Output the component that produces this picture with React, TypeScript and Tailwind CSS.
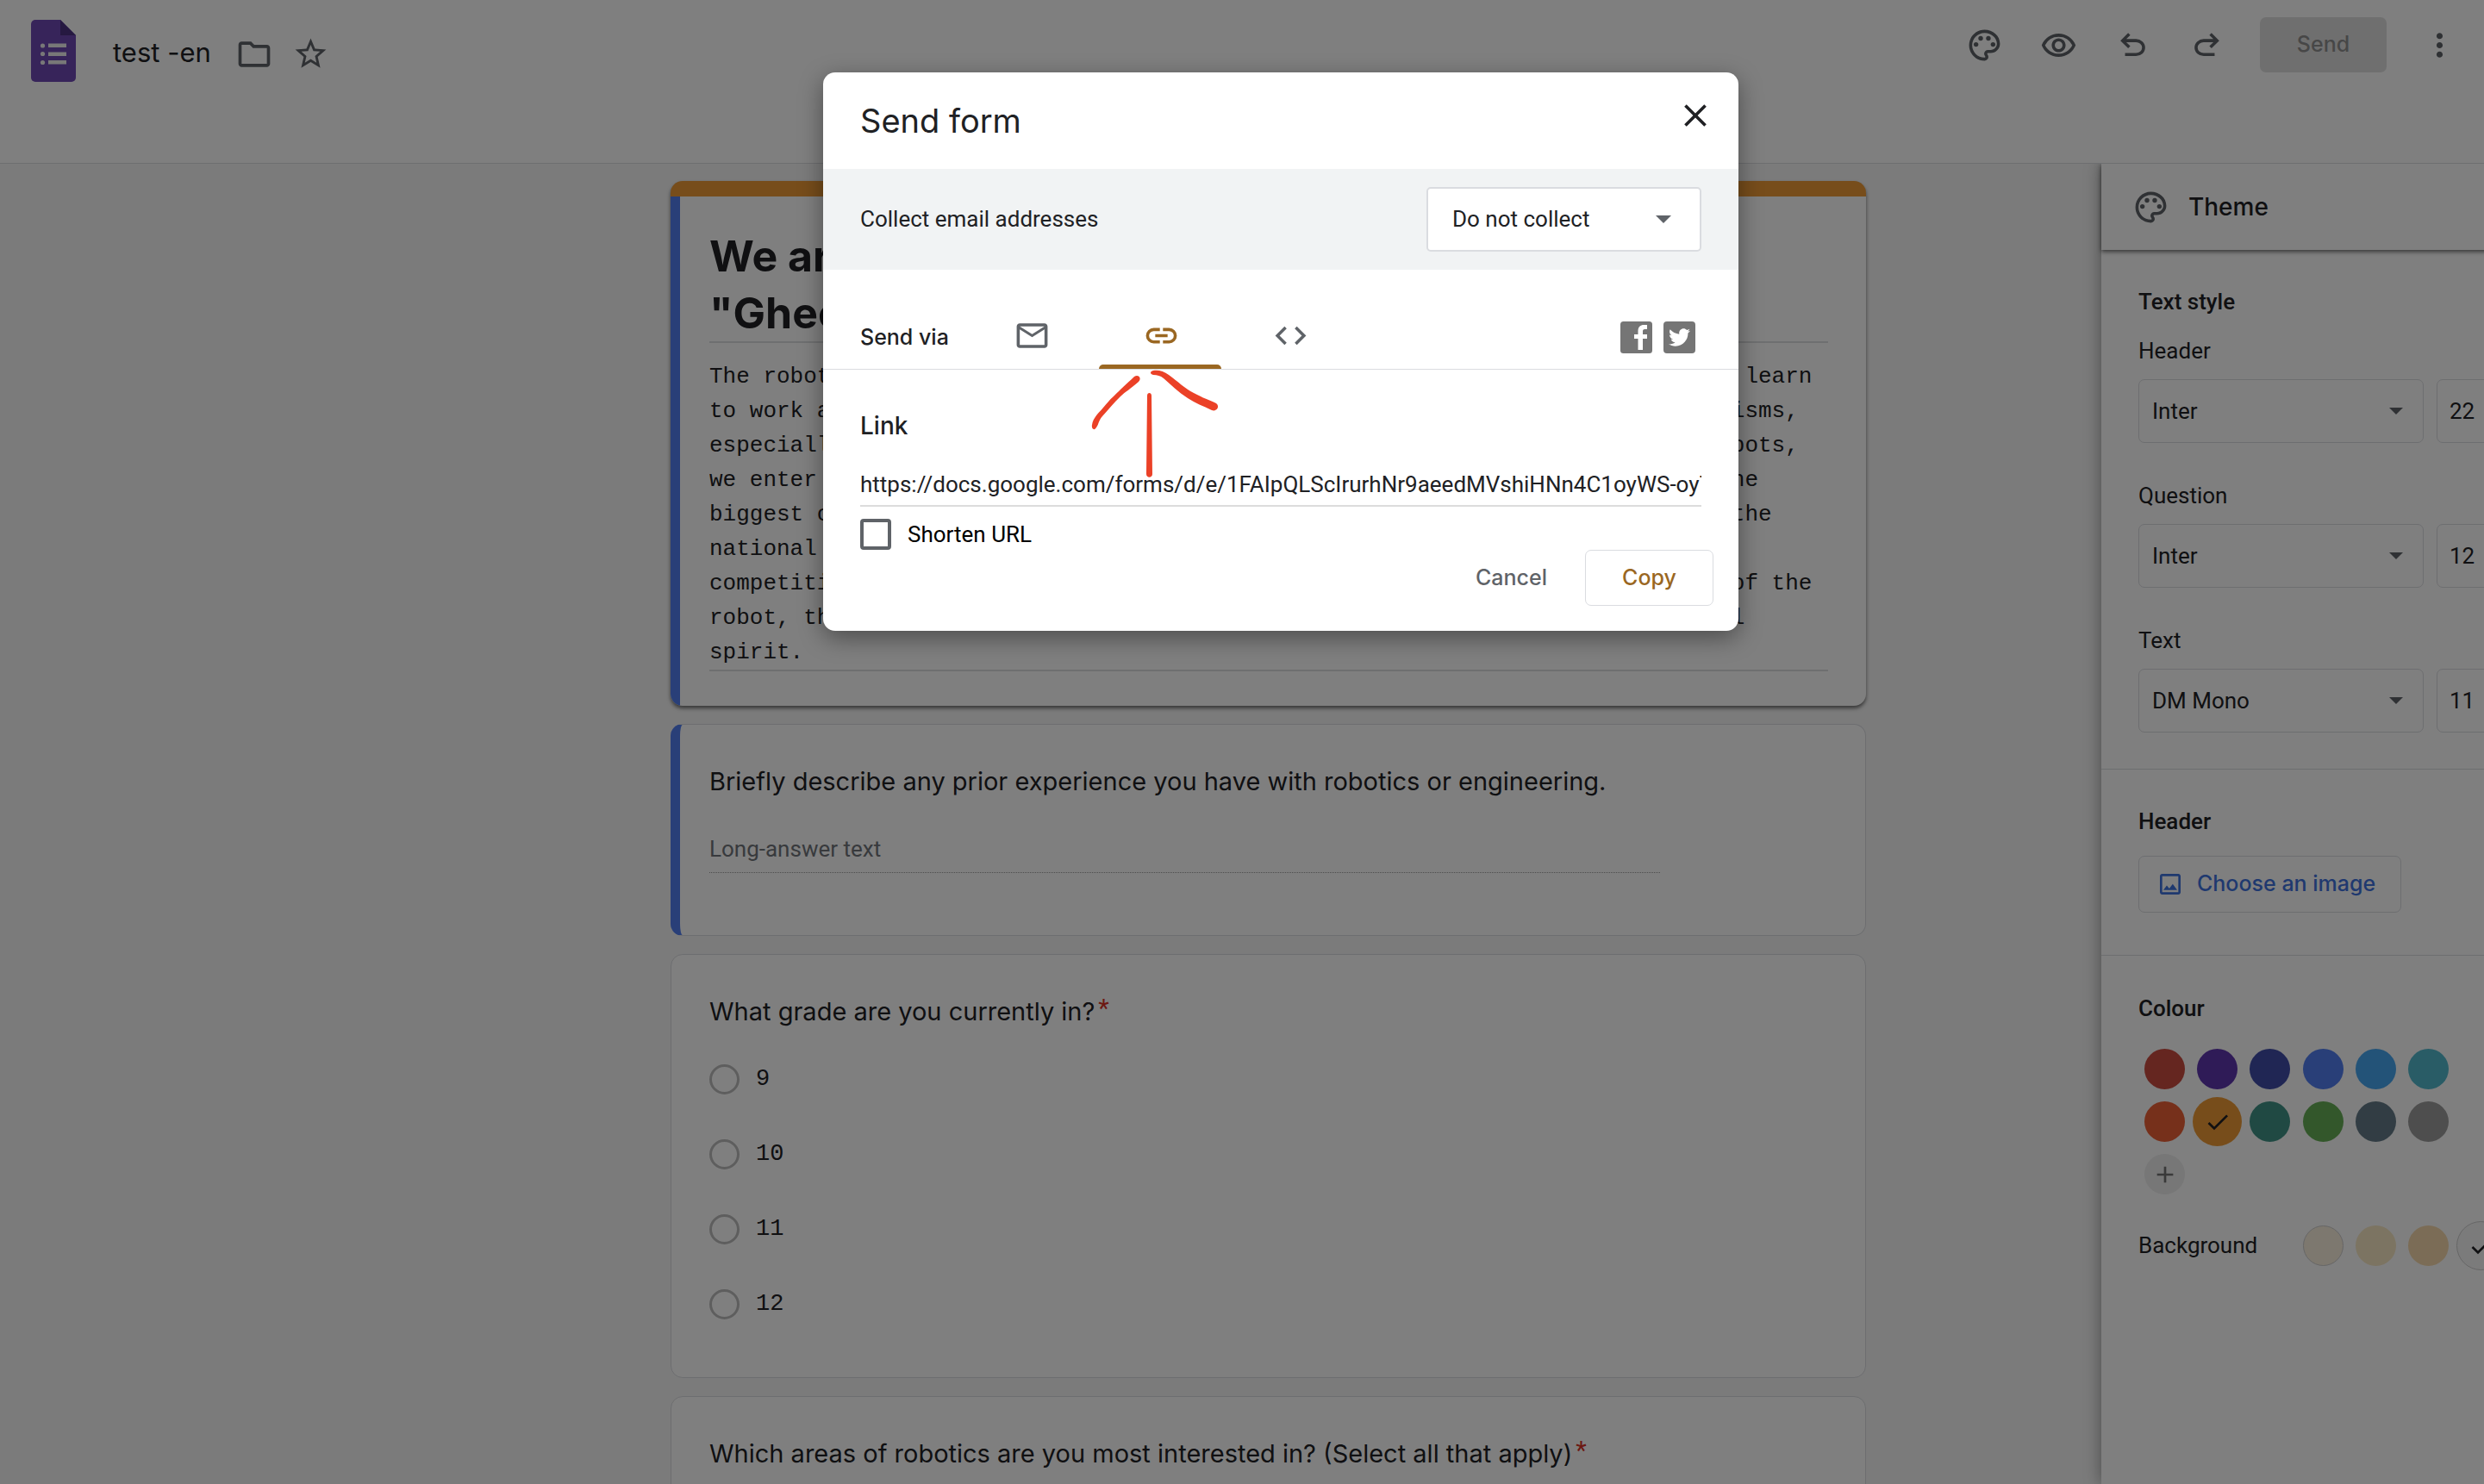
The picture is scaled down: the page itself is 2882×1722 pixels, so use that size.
import type { ReactNode } from "react";
import {
  MdAdd,
  MdCheck,
  MdClose,
  MdMoreVert,
  MdOutlineColorLens,
  MdOutlineFolder,
  MdOutlineImage,
  MdOutlineMailOutline,
  MdOutlineRemoveRedEye,
  MdOutlineStarBorder,
} from "react-icons/md";
import { FaTwitter } from "react-icons/fa";

const description = [
  "The robotics club at our school is a place where all the bright students can learn",
  "to work as a team, build robots, program them and design some complex mechanisms,",
  "especially drive trains and manipulators. With the help of our own finest robots,",
  "we enter competitions all over the country, and one of those, no doubt, is the",
  "biggest competitions of this year. We are looking for new people to join in the",
  "national championship with us. The",
  "competitions are about much more than just the careful mechanical strengths of the",
  "robot, they are also about friendship, mutual support, and the strong overall",
  "spirit.",
];

const colours = [
  { name: "Red", className: "size-[47px] bg-[#ca4c41]" },
  { name: "Purple", className: "size-[47px] bg-[#5f36ae]" },
  { name: "Indigo", className: "size-[47px] bg-[#404ca8]" },
  { name: "Blue", className: "size-[47px] bg-[#527ff0]" },
  { name: "Light blue", className: "size-[47px] bg-[#46a6f0]" },
  { name: "Cyan", className: "size-[47px] bg-[#52b9cd]" },
  { name: "Deep orange", className: "size-[47px] bg-[#ec6137]" },
  { name: "Orange", className: "size-[57px] bg-[#ee9b37]", selected: true },
  { name: "Teal", className: "size-[47px] bg-[#409386]" },
  { name: "Green", className: "size-[47px] bg-[#66af56]" },
  { name: "Blue grey", className: "size-[47px] bg-[#657b88]" },
  { name: "Grey", className: "size-[47px] bg-[#9c9c9c]" },
];

const backgrounds = [
  { name: "Light", className: "size-[47px] border border-[#cccccc] bg-[#fbf0de]" },
  { name: "Medium", className: "size-[47px] bg-[#f8e8c4]" },
  { name: "Dark", className: "size-[47px] bg-[#f6d9ac]" },
  { name: "Neutral", className: "size-[57px] border border-[#cccccc] bg-[#f6f6f6]", selected: true },
];

function UndoIcon({ flipped = false }: { flipped?: boolean }) {
  return (
    <svg viewBox="0 0 24 24" fill="currentColor" className={flipped ? "size-[43px] -scale-x-100" : "size-[43px]"}>
      <path d="M7 19v-2h7.1q1.575 0 2.737-1T18 13.5 16.838 11 14.1 10H7.8l2.6 2.6L9 14 4 9l5-5 1.4 1.4L7.8 8h6.3q2.425 0 4.163 1.575T20 13.5t-1.737 3.925T14.1 19z" />
    </svg>
  );
}

function Caret({ className }: { className: string }) {
  return (
    <svg viewBox="0 0 16 8" fill="#5f6368" className={className}>
      <path d="M0 0h16l-8 8z" />
    </svg>
  );
}

function FormsLogo() {
  return (
    <svg viewBox="0 0 52 72" className="h-[72px] w-[52px]">
      <path d="M5 0h29l18 18v49a5 5 0 0 1-5 5H5a5 5 0 0 1-5-5V5a5 5 0 0 1 5-5z" fill="#6f48b5" />
      <path d="M34 0l18 18H34z" fill="#4c3382" />
      <g fill="#f1f1f1">
        <circle cx="13.500" cy="30" r="2.600" />
        <circle cx="13.500" cy="39.500" r="2.600" />
        <circle cx="13.500" cy="49.500" r="2.600" />
        <path d="M20 27.500h21v4.500H20zM20 37.500h21V42H20zM20 47h21v4.500H20z" />
      </g>
    </svg>
  );
}

function Header() {
  return (
    <header className="flex h-[190px] shrink-0 items-start border-b border-[#dadce0] bg-white pr-[120px] pl-9 text-[#5f6368]">
      <a href="#forms" aria-label="Forms home" className="mt-[23px]">
        <FormsLogo />
      </a>
      <h1 className="mt-[38px] ml-[43px] font-['Inter',sans-serif] text-[31px] leading-[46px] text-[#202124]">test -en</h1>
      <button aria-label="Move to folder" className="mt-[41px] ml-7">
        <MdOutlineFolder className="size-[44px]" />
      </button>
      <button aria-label="Star" className="mt-[41px] ml-[22px]">
        <MdOutlineStarBorder className="size-[43px]" />
      </button>
      <div className="mt-5 ml-auto flex h-16 items-center">
        <button aria-label="Customise theme">
          <MdOutlineColorLens className="size-[43px]" />
        </button>
        <button aria-label="Preview" className="ml-[43px]">
          <MdOutlineRemoveRedEye className="size-[43px]" />
        </button>
        <button aria-label="Undo" className="ml-[43px]">
          <UndoIcon />
        </button>
        <button aria-label="Redo" className="ml-[43px]">
          <UndoIcon flipped />
        </button>
        <button className="ml-10 h-16 w-[147px] rounded-[7px] bg-[#dfdfdf] font-['Inter',sans-serif] text-[25px] font-medium text-[#8f8f8f]">
          Send
        </button>
        <button aria-label="More" className="ml-10">
          <MdMoreVert className="size-[43px]" />
        </button>
      </div>
    </header>
  );
}

function Question({ children, required = false }: { children: ReactNode; required?: boolean }) {
  return (
    <h3 className="flex font-['Inter',sans-serif] text-[29px] leading-9 text-[#202124]">
      {children}
      {required && <span className="ml-1 -mt-1 font-['Roboto',sans-serif] text-[#d93025]">*</span>}
    </h3>
  );
}

function FormCards() {
  return (
    <main className="flex min-w-0 flex-1 justify-center bg-[#f6f6f6] pt-5 pl-[505px]">
      <div className="flex w-full max-w-[1387px] flex-col gap-[21px]">
        <section className="shrink-0 overflow-hidden rounded-[14px] border-t-[18px] border-[#ee9b37] bg-white shadow-[0_3px_4px_#0008]">
          <div className="border-l-[11px] border-[#527ff0] pt-9 pr-11 pb-10 pl-[34px]">
            <h2 className="overflow-hidden border-b-2 border-[#dcdee1] font-['Inter',sans-serif] text-[50px] leading-[66px] font-bold whitespace-nowrap text-[#202124]">
              We are the robotics team
              <br />
              "Gheorghe Asachi" High School
            </h2>
            <p className="overflow-hidden border-b-2 border-[#dcdee1] pt-[19px] font-['Liberation_Mono',monospace] text-[26px] leading-[40px] whitespace-nowrap text-[#202124]">
              {description.map((line) => (
                <span key={line} className="block">
                  {line}
                </span>
              ))}
            </p>
          </div>
        </section>

        <section className="flex h-[246px] shrink-0 flex-col rounded-[14px] border-y border-r border-l-[11px] border-y-[#dadce0] border-r-[#dadce0] border-l-[#527ff0] bg-white pt-12 pr-[43px] pl-[34px]">
          <Question>Briefly describe any prior experience you have with robotics or engineering.</Question>
          <p className="mt-[42px] w-[85%] border-b border-dotted border-[#9a9a9a] pb-[9px] font-['Roboto',sans-serif] text-[26px] leading-9 text-[#70757a]">
            Long-answer text
          </p>
        </section>

        <section className="shrink-0 rounded-[14px] border border-[#dadce0] bg-white px-11 pt-12 pb-[67px]">
          <Question required>What grade are you currently in?</Question>
          <fieldset className="mt-[42px] flex flex-col gap-[51px]">
            {["9", "10", "11", "12"].map((grade) => (
              <label
                key={grade}
                className="flex h-9 items-center gap-[19px] font-['Liberation_Mono',monospace] text-[27px] text-[#202124]"
              >
                <input
                  type="radio"
                  name="grade"
                  className="size-[35px] appearance-none rounded-full border-3 border-[#bdbdbd]"
                />
                {grade}
              </label>
            ))}
          </fieldset>
        </section>

        <section className="h-[300px] shrink-0 rounded-[14px] border border-[#dadce0] bg-white px-11 pt-12">
          <Question required>Which areas of robotics are you most interested in? (Select all that apply)</Question>
        </section>
      </div>
    </main>
  );
}

function FontRow({ label, font, size }: { label: string; font: string; size: string }) {
  const id = label.toLowerCase();
  return (
    <div className="flex flex-col gap-[17px]">
      <label htmlFor={id} className="leading-8">
        {label}
      </label>
      <div className="flex gap-[15px]">
        <div className="relative">
          <select
            id={id}
            className="h-[74px] w-[331px] appearance-none rounded-[7px] border border-[#dadce0] px-[15px]"
            defaultValue={font}
          >
            <option>{font}</option>
          </select>
          <Caret className="pointer-events-none absolute top-[33px] right-6 h-2 w-4" />
        </div>
        <select
          aria-label={label + " size"}
          className="h-[74px] w-[102px] appearance-none rounded-[7px] border border-[#dadce0] px-3.5"
          defaultValue={size}
        >
          <option>{size}</option>
        </select>
      </div>
    </div>
  );
}

function Check() {
  return <MdCheck className="size-8 text-[#202124]" />;
}

function ThemePanel() {
  return (
    <aside className="z-10 w-[534px] shrink-0 bg-white font-['Roboto',sans-serif] text-[26px] text-[#202124] shadow-[0_0_18px_#0006]">
      <div className="flex h-[100px] items-center gap-[22px] pl-9 shadow-[0_2px_5px_#0009]">
        <MdOutlineColorLens className="size-[43px] text-[#5f6368]" />
        <h2 className="font-['Inter',sans-serif] text-[28px] font-medium">Theme</h2>
      </div>

      <section className="border-b border-[#dadce0] pt-11 pb-[42px] pl-[43px]">
        <h3 className="mb-[25px] leading-8 font-medium">Text style</h3>
        <div className="flex flex-col gap-[45px]">
          <FontRow label="Header" font="Inter" size="22" />
          <FontRow label="Question" font="Inter" size="12" />
          <FontRow label="Text" font="DM Mono" size="11" />
        </div>
      </section>

      <section className="border-b border-[#dadce0] pt-11 pb-[49px] pl-[43px]">
        <h3 className="mb-6 leading-8 font-medium">Header</h3>
        <button className="flex h-[66px] w-[305px] items-center gap-[15px] rounded-[7px] border border-[#dadce0] pl-5 font-['Inter',sans-serif] text-[25px] font-medium whitespace-nowrap text-[#3e72de]">
          <MdOutlineImage className="size-8 shrink-0" />
          Choose an image
        </button>
      </section>

      <section className="pt-[45px] pl-[43px]">
        <h3 className="mb-6 leading-8 font-medium">Colour</h3>
        <div className="grid w-[367px] grid-cols-6">
          {colours.map((colour) => (
            <div key={colour.name} className="flex h-[61px] items-center justify-center">
              <button aria-label={colour.name} className={"flex shrink-0 items-center justify-center rounded-full " + colour.className}>
                {colour.selected && <Check />}
              </button>
            </div>
          ))}
          <div className="flex h-[61px] items-center justify-center">
            <button aria-label="Add custom colour" className="flex size-[47px] items-center justify-center rounded-full bg-[#eeeeee]">
              <MdAdd className="size-8 text-[#757575]" />
            </button>
          </div>
        </div>
        <div className="mt-[22px] flex h-[61px] items-center">
          <h3 className="w-[184px]">Background</h3>
          {backgrounds.map((background) => (
            <div key={background.name} className="flex w-[61px] justify-center">
              <button
                aria-label={background.name}
                className={"flex shrink-0 items-center justify-center rounded-full " + background.className}
              >
                {background.selected && <Check />}
              </button>
            </div>
          ))}
        </div>
      </section>
    </aside>
  );
}

function RedArrow() {
  return (
    <svg
      viewBox="0 0 160 140"
      fill="#eb4127"
      className="pointer-events-none absolute top-[345px] left-[305px] h-[140px] w-[160px]"
    >
      <path d="M56 8C61 5 65 10 61 14C52 22 45 26 40 31C32 39 26 46 19 54C14 60 15 63 12 67C10 71 6 69 7 64C8 56 14 51 20 44C29 33 34 29 40 23C46 17 52 12 56 8z" />
      <path d="M71 30C71 26 76 26 76 30L77 121C77 126 70 126 70 121z" />
      <path d="M78 1C83 0 90 1 96 6C107 14 115 22 125 27C136 33 143 35 151 39C156 43 151 49 146 47C136 42 127 39 118 33C107 26 98 17 90 10C86 7 83 6 78 6C74 5 74 2 78 1z" />
    </svg>
  );
}

function SendDialog() {
  return (
    <div
      role="dialog"
      aria-labelledby="dialog-title"
      className="relative w-full max-w-[1062px] self-start rounded-[14px] bg-white font-['Roboto',sans-serif] text-[26px] text-[#202124] shadow-[0_8px_28px_#0006]"
    >
      <div className="flex items-start justify-between py-[26px] pr-[26px] pl-[43px]">
        <h2 id="dialog-title" className="font-['Inter',sans-serif] text-[38px] leading-[60px]">
          Send form
        </h2>
        <button aria-label="Close" className="flex size-12 items-center justify-center">
          <MdClose className="size-[44px]" />
        </button>
      </div>

      <div className="flex h-[117px] items-center justify-between bg-[#f1f3f4] px-[43px]">
        <label htmlFor="collect">Collect email addresses</label>
        <div className="relative">
          <select
            id="collect"
            defaultValue="Do not collect"
            className="h-[75px] w-[319px] appearance-none rounded-[5px] border-2 border-[#dadce0] bg-white px-7"
          >
            <option>Do not collect</option>
          </select>
          <Caret className="pointer-events-none absolute top-[33px] right-[35px] h-[9px] w-[18px]" />
        </div>
      </div>

      <div className="flex border-b border-[#dadce0] pt-[38px] pr-[50px] pl-[43px] text-[#5f6368]">
        <h3 className="h-[77px] w-[124px] font-['Inter',sans-serif] text-[25px] leading-[80px] font-medium text-[#202124]">
          Send via
        </h3>
        <button aria-label="Email" className="flex h-[77px] w-[150px] items-center justify-center">
          <MdOutlineMailOutline className="size-[43px]" />
        </button>
        <button aria-label="Link" className="relative flex h-[77px] w-[150px] items-center justify-center text-[#9a6722]">
          <svg viewBox="0 0 24 24" fill="currentColor" className="size-[43px]">
            <path d="M11 17H7q-2.075 0-3.537-1.463T2 12t1.463-3.537T7 7h4v2H7q-1.250 0-2.125.875T4 12t.875 2.125T7 15h4zm-3-4v-2h8v2zm5 4v-2h4q1.250 0 2.125-.875T20 12t-.875-2.125T17 9h-4V7h4q2.075 0 3.538 1.463T22 12t-1.463 3.538T17 17z" />
          </svg>
          <span className="absolute right-[5px] bottom-0 left-[3px] h-[5px] rounded-t-[5px] bg-[#9a6722]" />
        </button>
        <button aria-label="Embed HTML" className="flex h-[77px] w-[150px] items-center justify-center">
          <svg viewBox="0 0 24 24" fill="currentColor" className="size-[43px]">
            <path d="M8 18l-6-6 6-6 1.400 1.400L4.800 12l4.600 4.600zm8 0l-1.400-1.400 4.600-4.600-4.600-4.600L16 6l6 6z" />
          </svg>
        </button>
        <div className="mt-1 ml-auto flex items-center gap-[13px]">
          <a href="#facebook" aria-label="Share on Facebook">
            <svg viewBox="0 0 37 37" className="size-[37px]">
              <rect width="37" height="37" rx="3.500" fill="#757575" />
              <path
                d="M20.500 33V20H16v-5h4.500v-4c0-4.500 2.700-7 6.800-7H31v5h-2.600c-2 0-2.400 1-2.400 2.400V15h5v5h-5v13z"
                fill="#fff"
              />
            </svg>
          </a>
          <a
            href="#twitter"
            aria-label="Share on Twitter"
            className="flex size-[37px] items-center justify-center rounded bg-[#757575] text-white"
          >
            <FaTwitter className="size-[25px]" />
          </a>
        </div>
      </div>

      <div className="px-[43px] pt-[47px]">
        <label htmlFor="url" className="block font-['Inter',sans-serif] text-[28px] leading-9 font-medium">
          Link
        </label>
        <input
          id="url"
          readOnly
          value="https://docs.google.com/forms/d/e/1FAIpQLScIrurhNr9aeedMVshiHNn4C1oyWS-oy7Q/viewform"
          className="mt-[26px] h-[50px] w-full border-b-2 border-[#dcdcdc]"
        />
        <label className="mt-3.5 flex h-9 w-fit items-center gap-[19px] text-black">
          <input type="checkbox" className="size-9 appearance-none rounded border-4 border-[#5f6368]" />
          Shorten URL
        </label>
      </div>

      <div className="flex justify-end gap-11 pr-[29px] pb-[29px] font-['Inter',sans-serif] text-[25px] font-medium">
        <button className="text-[#5f6368]">Cancel</button>
        <button className="h-[65px] w-[149px] rounded-[7px] border border-[#dadce0] text-[#9a6722]">Copy</button>
      </div>

      <RedArrow />
    </div>
  );
}

export default function App() {
  return (
    <div className="h-screen overflow-hidden">
      <div className="relative flex h-full w-[calc(100%+90px)] flex-col">
        <Header />
        <div className="flex min-h-0 flex-1 overflow-hidden">
          <FormCards />
          <ThemePanel />
        </div>
        <div className="absolute inset-0 z-20 flex justify-center bg-black/50 pt-[84px]">
          <SendDialog />
        </div>
      </div>
    </div>
  );
}
